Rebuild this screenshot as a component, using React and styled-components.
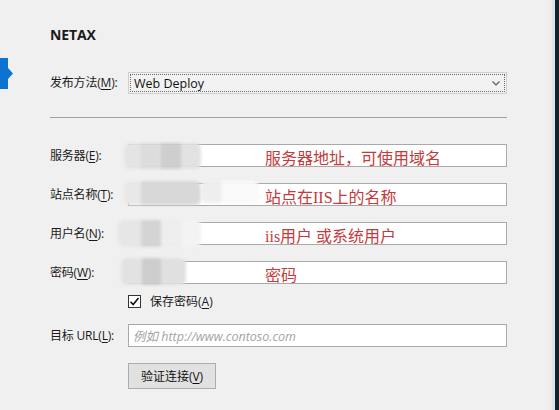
import React from "react";
import styled, { createGlobalStyle } from "styled-components";

const GlobalStyle = createGlobalStyle`
  html, body {
    margin: 0;
    padding: 0;
    background: #f0f0f0;
    overflow: hidden;
  }
`;

const UI_FONT = `"Open Sans", "Noto Sans CJK SC", sans-serif`;

const Frame = styled.div`
  width: 559px;
  height: 410px;
  display: flex;
  background: #f0f0f0;
  font-family: ${UI_FONT};
  color: #1a1a1a;
`;

const Rail = styled.div`
  width: 50px;
  padding-top: 58px;
  box-sizing: border-box;
`;

const Content = styled.div`
  width: 498px;
  padding-top: 25px;
  box-sizing: border-box;
  display: flex;
  flex-direction: column;
`;

const Edge = styled.div`
  display: flex;
  margin-left: auto;
`;

const Stripe = styled.div`
  width: ${p => p.$w}px;
  background: ${p => p.$color};
`;

const Title = styled.div`
  font-size: 14px;
  line-height: 19px;
  font-weight: 700;
  letter-spacing: -0.1px;
`;

const Grid = styled.div`
  display: grid;
  grid-template-columns: 78px 379px;
  align-items: center;
  margin-top: ${p => p.$top}px;
  row-gap: ${p => p.$gap || 0}px;
`;

const Label = styled.div`
  font-size: 12px;
  line-height: 16px;
  white-space: nowrap;
  letter-spacing: -0.2px;
`;

const Select = styled.div`
  height: 22px;
  box-sizing: border-box;
  border: 1px solid #cfcfcf;
  padding: 1px;
  background: #f2f2f2;
`;

const SelectInner = styled.div`
  height: 100%;
  box-sizing: border-box;
  border: 1px dotted #6b6b6b;
  display: flex;
  align-items: center;
  justify-content: space-between;
  padding: 0 4px 0 3px;
  font-size: 12.5px;
  color: #111;
`;

const Divider = styled.div`
  width: 457px;
  height: 1px;
  background: #a0a0a0;
  margin-top: 23px;
`;

const Field = styled.div`
  position: relative;
  height: 23px;
  box-sizing: border-box;
  border: 1px solid #a9a9a9;
  background: #fff;
  padding: 6px 0 0 136px;
  font-family: "Liberation Serif", "Noto Sans CJK SC", serif;
  font-size: 16px;
  line-height: 16px;
  color: #c53a3b;
  white-space: nowrap;
`;

const Smudge = styled.div`
  position: absolute;
  left: ${p => p.$left}px;
  top: ${p => p.$top}px;
  width: ${p => p.$width}px;
  height: ${p => p.$height}px;
  background: ${p => p.$bands};
  filter: blur(1.5px);
  border-radius: 6px;
`;

const CheckRow = styled.label`
  grid-column: 2;
  display: flex;
  align-items: center;
  gap: 9px;
  font-size: 12px;
  line-height: 13px;
  margin-top: 11px;
`;

const Box = styled.span`
  width: 13px;
  height: 13px;
  box-sizing: border-box;
  border: 1px solid #333;
  background: #fff;
  display: flex;
  align-items: center;
  justify-content: center;
`;

const UrlField = styled.div`
  height: 23px;
  box-sizing: border-box;
  border: 1px solid #a9a9a9;
  background: #fff;
  display: flex;
  align-items: center;
  padding-left: 4px;
  font-size: 12.5px;
  font-style: italic;
  color: #a3a3a3;
`;

const Button = styled.button`
  grid-column: 2;
  justify-self: start;
  width: 88px;
  height: 26px;
  margin-top: 16px;
  background: #e1e1e1;
  border: 1px solid #adadad;
  font-family: ${UI_FONT};
  font-size: 12px;
  color: #111;
  padding: 0;
`;

const U = styled.span`
  text-decoration: underline;
  text-underline-offset: 2px;
`;

const rows = [
  {
    label: "服务器",
    key: "E",
    note: "服务器地址，可使用域名",
    smudge: {
      left: -5, top: -2, width: 77, height: 26,
      bands: "linear-gradient(to right, #e4e4e4 0 22%, #dcdcdc 22% 48%, #cecece 48% 74%, #e2e2e2 74%)"
    },
    extra: null
  },
  {
    label: "站点名称",
    key: "T",
    note: "站点在IIS上的名称",
    smudge: {
      left: -5, top: -3, width: 77, height: 24,
      bands: "linear-gradient(to right, #e8e8e8 0 22%, #d8d8d8 22%)"
    },
    extra: {
      left: 72, top: -3, width: 58, height: 22,
      bands: "linear-gradient(to right, #eeeeee 0 34%, #f9f9f9 34%)"
    }
  },
  {
    label: "用户名",
    key: "N",
    note: "iis用户 或系统用户",
    smudge: {
      left: -11, top: -3, width: 83, height: 27,
      bands: "linear-gradient(to right, #e6e6e6 0 28%, #d4d4d4 28% 52%, #eeeeee 52% 76%, #f3f3f3 76%)"
    },
    extra: null
  },
  {
    label: "密码",
    key: "W",
    note: "密码",
    smudge: {
      left: -8, top: -4, width: 65, height: 27,
      bands: "linear-gradient(to right, #e2e2e2 0 32%, #cdcdcd 32% 62%, #e0e0e0 62%)"
    },
    extra: null
  }
];

const Arrow = () => (
  <svg width="13" height="31" viewBox="0 0 13 31">
    <path d="M0 0 H8 V10 L13 15.5 L8 21 V31 H0 Z" fill="#0b74d1" />
  </svg>
);

const Chevron = () => (
  <svg width="8" height="5" viewBox="0 0 8 5">
    <path d="M0.5 0.5 L4 4 L7.5 0.5" fill="none" stroke="#5a5a5a" strokeWidth="1.2" />
  </svg>
);

const Tick = () => (
  <svg width="11" height="11" viewBox="0 0 11 11">
    <path d="M1.5 5.8 L4.2 8.5 L9.5 2" fill="none" stroke="#111" strokeWidth="1.6" />
  </svg>
);

const App = () => {
  return (
    <>
      <GlobalStyle />
      <Frame>
        <Rail>
          <Arrow />
        </Rail>
        <Content>
          <Title>NETAX</Title>
          <Grid $top={28}>
            <Label>
              发布方法(<U>M</U>):
            </Label>
            <Select>
              <SelectInner>
                <span>Web Deploy</span>
                <Chevron />
              </SelectInner>
            </Select>
          </Grid>
          <Divider />
          <Grid $top={26} $gap={16}>
            {rows.map(row => (
              <React.Fragment key={row.key}>
                <Label>
                  {row.label}(<U>{row.key}</U>):
                </Label>
                <Field>
                  {row.note}
                  <Smudge
                    $left={row.smudge.left}
                    $top={row.smudge.top}
                    $width={row.smudge.width}
                    $height={row.smudge.height}
                    $bands={row.smudge.bands}
                  />
                  {row.extra && (
                    <Smudge
                      $left={row.extra.left}
                      $top={row.extra.top}
                      $width={row.extra.width}
                      $height={row.extra.height}
                      $bands={row.extra.bands}
                    />
                  )}
                </Field>
              </React.Fragment>
            ))}
          </Grid>
          <Grid $top={0}>
            <CheckRow>
              <Box>
                <Tick />
              </Box>
              <span>
                保存密码(<U>A</U>)
              </span>
            </CheckRow>
          </Grid>
          <Grid $top={16}>
            <Label>
              目标 URL(<U>L</U>):
            </Label>
            <UrlField>例如 http://www.contoso.com</UrlField>
            <Button>
              验证连接(<U>V</U>)
            </Button>
          </Grid>
        </Content>
        <Edge>
          <Stripe $w={4} $color="#f3ebe4" />
          <Stripe $w={3} $color="#d3e8f4" />
          <Stripe $w={4} $color="#1b2027" />
        </Edge>
      </Frame>
    </>
  );
};

export default App;
